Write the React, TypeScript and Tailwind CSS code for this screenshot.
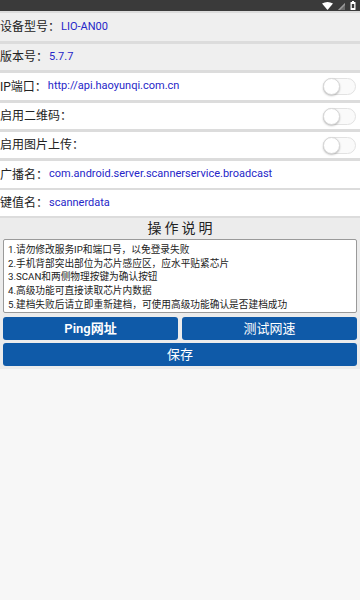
export default function App() {
  const rows = [
    { label: "设备型号：", value: "LIO-AN00", bg: "bg-[#efefef]", h: "h-[31px]", b: "border-b-[3px]" },
    { label: "版本号：", value: "5.7.7", bg: "bg-[#efefef]", h: "h-[29px]", b: "border-b-[3px]" },
    { label: "IP端口：", value: "http://api.haoyunqi.com.cn", toggle: true, bg: "bg-white", h: "h-[30px]", b: "border-b-[3px]" },
    { label: "启用二维码：", toggle: true, bg: "bg-white", h: "h-[29px]", b: "border-b-[3px]" },
    { label: "启用图片上传：", toggle: true, bg: "bg-white", h: "h-[29px]", b: "border-b-[3px]" },
    { label: "广播名：", value: "com.android.server.scannerservice.broadcast", bg: "bg-white", h: "h-[29px]", b: "border-b-[2px]" },
    { label: "键值名：", value: "scannerdata", bg: "bg-white", h: "h-[28px]", b: "border-b-[2px]" },
  ];

  const tips = [
    "1.请勿修改服务IP和端口号，以免登录失败",
    "2.手机背部突出部位为芯片感应区，应水平贴紧芯片",
    "3.SCAN和两侧物理按键为确认按钮",
    "4.高级功能可直接读取芯片内数据",
    "5.建档失败后请立即重新建档，可使用高级功能确认是否建档成功",
  ];

  return (
    <div className="w-[360px] h-[600px] flex flex-col bg-[#f6f6f6] font-['Roboto','Noto_Sans_CJK_SC',sans-serif] overflow-hidden [text-spacing-trim:space-all]">
      {/* status bar */}
      <div className="h-[11px] bg-[#3a3a3a] flex items-center justify-end gap-[5px] pr-[4px] shrink-0">
        <svg width="11" height="8" viewBox="0 0 11 8">
          <path d="M0 1.5 Q5.5 -1.5 11 1.5 L5.5 8 Z" fill="#ffffff" />
        </svg>
        <svg width="7" height="8" viewBox="0 0 7 8">
          <path d="M0 8 L7 1 L7 8 Z" fill="#6a6a6a" />
          <path d="M0 8 L2 8 L7 3 L7 1 Z" fill="#9a9a9a" />
        </svg>
        <svg width="6" height="9" viewBox="0 0 6 9">
          <rect x="0.5" y="1" width="5" height="8" rx="0.5" fill="#ffffff" />
          <rect x="2" y="0" width="2" height="1" fill="#ffffff" />
          <rect x="1.8" y="3" width="2.4" height="4" fill="#3a3a3a" />
        </svg>
      </div>
      <div className="h-[2px] bg-[#dcdcdc] shrink-0" />

      {rows.map((r) => (
        <div
          key={r.label}
          className={`${r.h} ${r.bg} ${r.b} border-[#dcdcdc] flex items-center shrink-0`}
        >
          <span className="text-[12px] text-[#222] whitespace-nowrap">{r.label}</span>
          {r.value && (
            <span className="text-[11px] text-[#2626c8] whitespace-nowrap ml-px">{r.value}</span>
          )}
          {r.toggle && (
            <div className="ml-auto mr-[4px] w-[33px] h-[17px] rounded-full border border-[#e2e2e2] bg-[#fafafa] relative">
              <div className="absolute left-[-1px] top-[-1px] w-[17px] h-[17px] rounded-full bg-white border border-[#d8d8d8] shadow-[0_1px_2px_rgba(0,0,0,0.25)]" />
            </div>
          )}
        </div>
      ))}

      <div className="bg-[#ececec] flex flex-col shrink-0 pb-[3px]">
        <div className="h-[20px] flex items-center justify-center text-[14px] text-[#222] tracking-[3px] pl-[3px]">
          操作说明
        </div>
        <div className="mx-[3px] mt-px h-[74px] bg-white border border-[#9a9a9a] rounded-[2px] px-[4px] pt-[3px] flex flex-col">
          {tips.map((t) => (
            <div key={t} className="text-[9.7px] leading-[13.7px] text-[#222] whitespace-nowrap">
              {t}
            </div>
          ))}
        </div>
        <div className="flex gap-[4px] mx-[3px] mt-[4px]">
          <button className="flex-1 h-[23px] rounded-[3px] bg-[#0f5aa8] text-white text-[13px] font-semibold">
            Ping网址
          </button>
          <button className="flex-1 h-[23px] rounded-[3px] bg-[#0f5aa8] text-white text-[13px]">
            测试网速
          </button>
        </div>
        <button className="mx-[3px] mt-[3px] h-[23px] rounded-[3px] bg-[#0f5aa8] text-white text-[13px]">
          保存
        </button>
      </div>
      <div className="flex-1 bg-[#f7f7f7]" />
    </div>
  );
}
